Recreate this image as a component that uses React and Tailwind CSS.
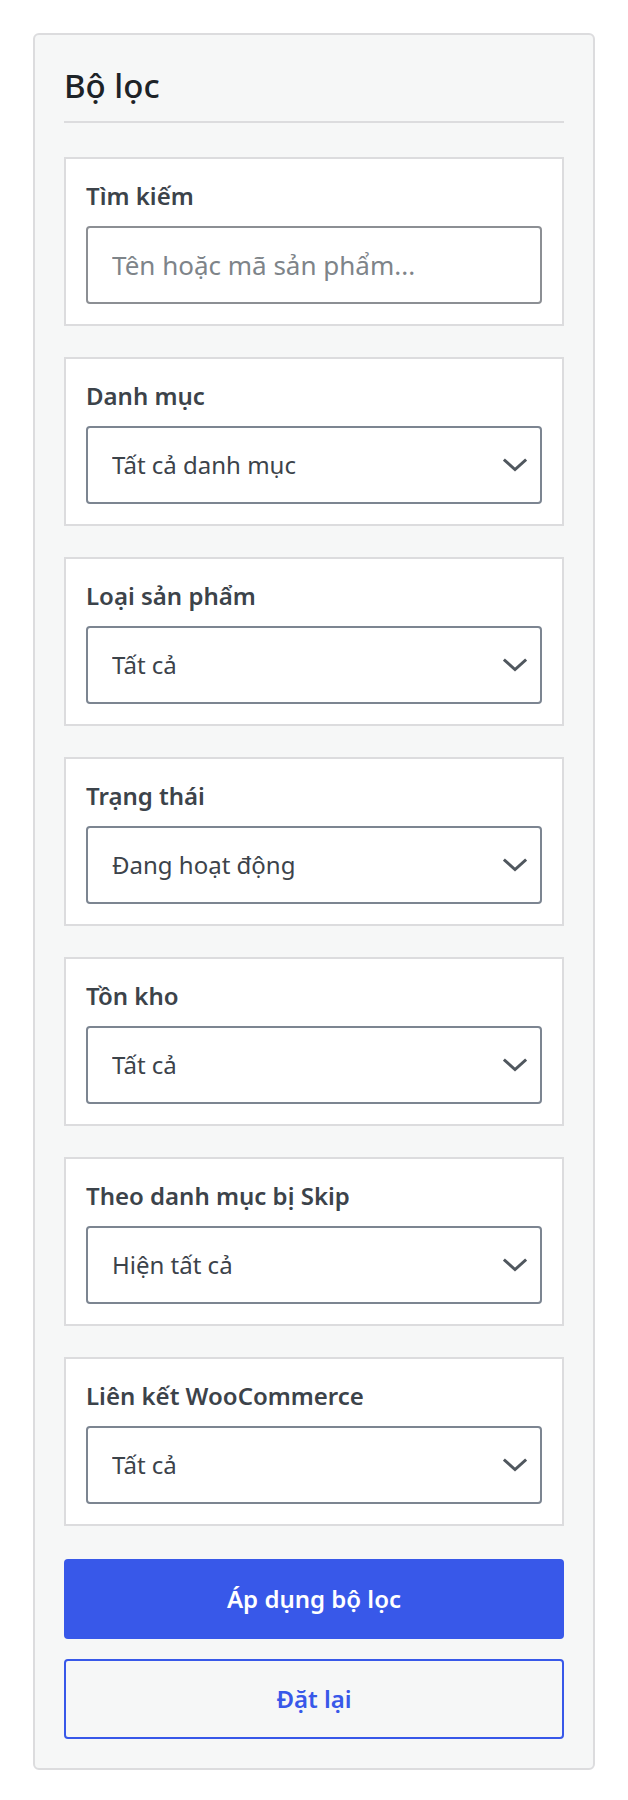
import { useState } from "react";

const fields = [
  { label: "Danh mục", value: "Tất cả danh mục" },
  { label: "Loại sản phẩm", value: "Tất cả" },
  { label: "Trạng thái", value: "Đang hoạt động" },
  { label: "Tồn kho", value: "Tất cả" },
  { label: "Theo danh mục bị Skip", value: "Hiện tất cả" },
  { label: "Liên kết WooCommerce", value: "Tất cả" },
];

const Chevron = () => (
  <svg
    className="pointer-events-none absolute right-[15px] top-1/2 -translate-y-1/2"
    width="24"
    height="14"
    viewBox="0 0 24 14"
    fill="none"
  >
    <path d="M2 2.5 L12 11.5 L22 2.5" stroke="#50575e" strokeWidth="3" strokeLinecap="square" />
  </svg>
);

const Section = ({ label, children }) => (
  <div className="border-2 border-[#dcdcde] bg-white p-[20px]">
    <label className="block text-[24px] font-semibold leading-[34px] text-[#3c434a]">{label}</label>
    <div className="mt-[13px]">{children}</div>
  </div>
);

const SelectField = ({ label, value }) => (
  <Section label={label}>
    <div className="relative">
      <select
        defaultValue={value}
        className="h-[78px] w-full appearance-none rounded-[4px] border-2 border-[#7c8591] bg-white pl-[24px] pr-[50px] text-[24px] text-[#3c434a] outline-none"
      >
        <option>{value}</option>
      </select>
      <Chevron />
    </div>
  </Section>
);

export default function App() {
  const [search, setSearch] = useState("");

  return (
    <div className="min-h-screen bg-white pl-[33px] pt-[33px]" style={{ fontFamily: '"Noto Sans", "Open Sans", sans-serif' }}>
      <div className="w-[562px] rounded-[6px] border-2 border-[#dcdcde] bg-[#f6f7f7] px-[29px] pb-[29px] pt-[31px]">
        <h2 className="border-b-2 border-[#dcdcde] pb-[15px] text-[33px] leading-[40px] font-medium text-[#1d2327]">Bộ lọc</h2>

        <div className="mt-[34px] flex flex-col gap-[31px]">
          <Section label="Tìm kiếm">
            <input
              value={search}
              onChange={(e) => setSearch(e.target.value)}
              placeholder="Tên hoặc mã sản phẩm..."
              className="h-[78px] w-full rounded-[4px] border-2 border-[#8c8f94] bg-white px-[24px] text-[26px] text-[#3c434a] outline-none placeholder:text-[#7e8489]"
            />
          </Section>
          {fields.map((f) => (
            <SelectField key={f.label} label={f.label} value={f.value} />
          ))}
        </div>

        <div className="mt-[33px] flex flex-col gap-[20px]">
          <button className="h-[80px] w-full rounded-[4px] bg-[#3858e9] text-[24px] font-semibold text-white">
            Áp dụng bộ lọc
          </button>
          <button className="h-[80px] w-full rounded-[4px] border-2 border-[#3858e9] text-[24px] font-semibold text-[#3858e9]">
            Đặt lại
          </button>
        </div>
      </div>
    </div>
  );
}
